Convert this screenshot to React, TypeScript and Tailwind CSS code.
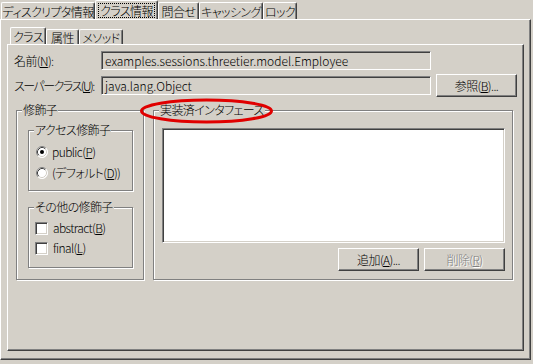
import React from "react";

function OuterTab({ label, w, active }: { label: string; w: string; active?: boolean }) {
  return (
    <div
      className={
        active
          ? "h-[19px] flex items-center justify-center whitespace-nowrap border-t border-l border-white border-r border-r-[#404040] shadow-[inset_-1px_0_0_#808080] rounded-t-[2px] " + w
          : "h-[17px] flex items-center justify-center whitespace-nowrap border-t border-l border-white border-r border-r-[#404040] shadow-[inset_-1px_0_0_#808080] rounded-t-[2px] " + w
      }
    >
      {active ? (
        <span className="outline outline-1 outline-dotted outline-black leading-[13px] px-[1px]">{label}</span>
      ) : (
        <span className="leading-[13px]">{label}</span>
      )}
    </div>
  );
}

function InnerTab({ label, w, active }: { label: string; w: string; active?: boolean }) {
  return (
    <div
      className={
        active
          ? "h-[17px] flex items-center justify-center whitespace-nowrap border-t border-l border-white border-r border-r-[#404040] shadow-[inset_-1px_0_0_#808080] rounded-t-[2px] " + w
          : "h-[15px] flex items-center justify-center whitespace-nowrap border-t border-l border-white border-r border-r-[#404040] shadow-[inset_-1px_0_0_#808080] rounded-t-[2px] " + w
      }
    >
      <span className="leading-[13px]">{label}</span>
    </div>
  );
}

function Group({
  label,
  className,
  children,
}: {
  label: string;
  className: string;
  children?: React.ReactNode;
}) {
  return (
    <fieldset
      className={
        "block border border-[#808080] shadow-[inset_1px_1px_0_#fff,1px_1px_0_#fff] " + className
      }
    >
      <legend className="ml-[5px] px-[1px] leading-[14px] whitespace-nowrap bg-[#d4d0c8]">{label}</legend>
      {children}
    </fieldset>
  );
}

function Radio({ checked, children }: { checked?: boolean; children: React.ReactNode }) {
  return (
    <div className="h-[21px] flex items-center pl-[7px] gap-[4px] whitespace-nowrap">
      <svg width="12" height="12" viewBox="0 0 12 12" className="shrink-0">
        <circle cx="6" cy="6" r="5.5" fill="#fff" />
        <path d="M9.89 2.11 A5.5 5.5 0 0 0 2.11 9.89" stroke="#808080" strokeWidth="1" fill="none" />
        <path d="M2.11 9.89 A5.5 5.5 0 0 0 9.89 2.11" stroke="#ffffff" strokeWidth="1" fill="none" />
        <path d="M9.18 2.82 A4.5 4.5 0 0 0 2.82 9.18" stroke="#404040" strokeWidth="1" fill="none" />
        <path d="M2.82 9.18 A4.5 4.5 0 0 0 9.18 2.82" stroke="#d4d0c8" strokeWidth="1" fill="none" />
        {checked && <circle cx="6" cy="6" r="2" fill="#000" />}
      </svg>
      <span className="leading-[14px]">{children}</span>
    </div>
  );
}

function Check({ children }: { children: React.ReactNode }) {
  return (
    <div className="h-[20px] flex items-center pl-[6px] gap-[5px] whitespace-nowrap">
      <div className="w-[13px] h-[13px] shrink-0 bg-white border-t border-l border-t-[#808080] border-l-[#808080] border-b border-r border-b-white border-r-white shadow-[inset_1px_1px_0_#404040,inset_-1px_-1px_0_#d4d0c8]" />
      <span className="leading-[14px]">{children}</span>
    </div>
  );
}

function Button({ children, disabled }: { children: React.ReactNode; disabled?: boolean }) {
  return (
    <div
      className={
        disabled
          ? "w-[81px] h-[23px] flex items-center justify-center whitespace-nowrap border-t border-l border-white border-b border-r border-b-[#404040] border-r-[#404040] shadow-[inset_-1px_-1px_0_#808080] text-[#808080] [text-shadow:1px_1px_0_#fff]"
          : "w-[81px] h-[23px] flex items-center justify-center whitespace-nowrap border-t border-l border-white border-b border-r border-b-[#404040] border-r-[#404040] shadow-[inset_-1px_-1px_0_#808080]"
      }
    >
      <span className="leading-[14px]">{children}</span>
    </div>
  );
}

function Field({ text, w }: { text: string; w: string }) {
  return (
    <div
      className={
        "h-[19px] flex items-center pl-[2px] whitespace-nowrap tracking-normal border-t border-l border-t-[#808080] border-l-[#808080] border-b border-r border-b-white border-r-white shadow-[inset_1px_1px_0_#404040,inset_-1px_-1px_0_#d4d0c8] " +
        w
      }
    >
      <span className="leading-[14px] pl-[1px]">{text}</span>
    </div>
  );
}

export default function App() {
  return (
    <div className="w-[533px] h-[364px] bg-[#d4d0c8] relative overflow-hidden text-[12px] font-light tracking-[-0.6px] text-black font-['Noto_Sans_CJK_JP',sans-serif] [font-feature-settings:'palt']">
      {/* outer tabs */}
      <div className="h-[19px] flex items-end pl-[1px]">
        <OuterTab label="ディスクリプタ情報" w="w-[94px]" />
        <OuterTab label="クラス情報" w="w-[63px]" active />
        <OuterTab label="問合せ" w="w-[41px]" />
        <OuterTab label="キャッシング" w="w-[64px]" />
        <OuterTab label="ロック" w="w-[34px]" />
      </div>
      {/* outer panel */}
      <div className="w-[531px] h-[341px] border-t border-l border-white border-r border-b border-r-[#404040] border-b-[#404040] shadow-[inset_-1px_-1px_0_#808080] pt-[7px] pl-[6px]">
        {/* inner tabs */}
        <div className="h-[17px] flex items-end pl-[3px]">
          <InnerTab label="クラス" w="w-[36px]" active />
          <InnerTab label="属性" w="w-[33px]" />
          <InnerTab label="メソッド" w="w-[44px]" />
        </div>
        {/* inner panel */}
        <div className="w-[517px] h-[307px] border-t border-l border-white border-r border-b border-r-[#404040] border-b-[#404040] shadow-[inset_-1px_-1px_0_#808080] flex flex-col">
          <div className="mt-[6px] h-[19px] flex items-center">
            <div className="w-[93px] pl-[6px] leading-[14px] whitespace-nowrap">
              名前(<span className="underline">N</span>):
            </div>
            <Field text="examples.sessions.threetier.model.Employee" w="w-[330px]" />
          </div>
          <div className="mt-[4px] h-[23px] flex items-center">
            <div className="w-[93px] pl-[6px] leading-[14px] whitespace-nowrap tracking-[-1.5px]">
              スーパークラス(<span className="underline">U</span>):
            </div>
            <Field text="java.lang.Object" w="w-[330px]" />
            <div className="ml-[5px]">
              <Button>
                参照(<span className="underline">B</span>)...
              </Button>
            </div>
          </div>
          <div className="mt-[6px] flex items-start pl-[8px]">
            <Group label="修飾子" className="w-[128px]">
              <div className="h-[162px] pl-[11px] pt-[6px] flex flex-col gap-[9px]">
                <Group label="アクセス修飾子" className="w-[105px]">
                  <div className="h-[53px] pt-[4px]">
                    <Radio checked>
                      public(<span className="underline">P</span>)
                    </Radio>
                    <Radio>
                      (デフォルト(<span className="underline">D</span>))
                    </Radio>
                  </div>
                </Group>
                <Group label="その他の修飾子" className="w-[105px]">
                  <div className="h-[53px] pt-[4px]">
                    <Check>
                      abstract(<span className="underline">B</span>)
                    </Check>
                    <Check>
                      final(<span className="underline">L</span>)
                    </Check>
                  </div>
                </Group>
              </div>
            </Group>
            <Group label="実装済インタフェース" className="ml-[9px] w-[360px]">
              <div className="h-[162px] pl-[8px] pt-[11px]">
                <div className="w-[343px] h-[115px] bg-white border-t border-l border-t-[#808080] border-l-[#808080] border-b border-r border-b-white border-r-white shadow-[inset_1px_1px_0_#404040,inset_-1px_-1px_0_#d4d0c8]" />
                <div className="mt-[5px] w-[343px] flex justify-end gap-[5px]">
                  <Button>
                    追加(<span className="underline">A</span>)...
                  </Button>
                  <Button disabled>
                    削除(<span className="underline">R</span>)
                  </Button>
                </div>
              </div>
            </Group>
          </div>
        </div>
      </div>
      {/* red annotation ellipse */}
      <svg className="absolute left-[139px] top-[98px]" width="136" height="27" viewBox="0 0 136 27">
        <ellipse cx="67.5" cy="13" rx="65" ry="11" fill="none" stroke="#e00000" strokeWidth="3" />
      </svg>
    </div>
  );
}
